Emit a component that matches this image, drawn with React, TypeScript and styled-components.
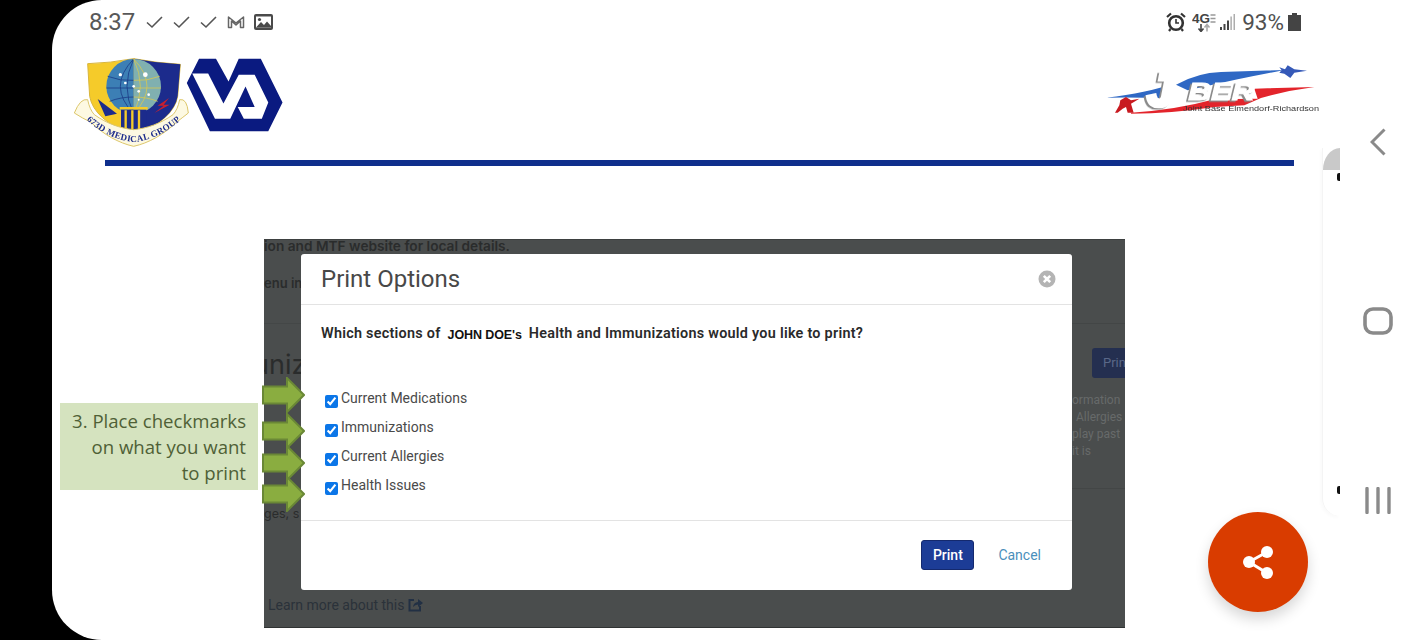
import React from "react";
import styled, { createGlobalStyle } from "styled-components";

const Global = createGlobalStyle`
  html, body { margin: 0; padding: 0; background: #000; }
  body { font-family: Roboto, "Liberation Sans", sans-serif; }
`;

const Page = styled.div`
  width: 1422px; height: 640px; background: #000; padding-left: 52px;
  box-sizing: border-box; display: flex; overflow: hidden;
`;
const Screen = styled.div`
  flex: 1; background: #fff; border-radius: 50px 0 0 50px; display: flex; position: relative; overflow: hidden;
`;
const Main = styled.main`
  width: 1270px; flex: none; display: flex; flex-direction: column;
`;
const StatusBar = styled.div`
  height: 44px; flex: none; padding: 0 21px 0 37px; display: flex; align-items: center; justify-content: space-between; color: #555;
`;
const StatusGroup = styled.div`
  display: flex; align-items: center;
`;
const Clock = styled.span`
  font-size: 24px; color: #585858; margin-right: 11px; width: 46px;
`;
const Percent = styled.span`
  font-size: 22.5px; color: #505050; margin: 0 4px 0 7px;
`;
const LogoRow = styled.div`
  height: 110px; flex: none; padding: 14px 0 0 21px; display: flex; align-items: flex-start; box-sizing: border-box;
`;
const Logo = styled.svg<{ $ml?: number; $mt?: number }>`
  flex: none; filter: blur(0.5px); margin-left: ${(p) => p.$ml ?? 0}px; margin-top: ${(p) => p.$mt ?? 0}px;
`;
const Rule = styled.div`
  width: 1189px; height: 6px; background: #0f2f8c; margin: 6px 0 0 53px; flex: none;
`;
const Stage = styled.div`
  display: flex; align-items: flex-start; margin-top: 73px; padding-left: 8px;
`;
const Callout = styled.div`
  width: 198px; height: 87px; margin: 164px 6px 0 0; flex: none; background: #d5e3bf; box-sizing: border-box;
  padding: 5px 12px 0 0; text-align: right; font-family: "Open Sans", sans-serif; font-size: 18.6px; line-height: 26px; color: #4f6036;
`;
const Shot = styled.div`
  width: 861px; height: 389px; flex: none; position: relative; background: #4a4d4d; color: #2c2f2f;
  display: grid; grid-template-columns: 37px 771px 53px; grid-template-rows: 15px 336px 38px;
  font-family: Inter, Roboto, sans-serif; overflow: visible;
`;
const ShotTop = styled.div`
  grid-column: 1 / 4; font-size: 13.7px; font-weight: 600; line-height: 13px; white-space: nowrap; overflow: hidden; border-top: 1px solid #3d4040; box-sizing: border-box; color: #2a2c2c;
`;
const Gutter = styled.div`
  overflow: hidden; white-space: nowrap; display: flex; flex-direction: column;
`;
const GutterBold = styled.div`
  font-size: 13px; font-weight: 600; line-height: 16px; margin-top: 21px; color: #2a2c2c;
`;
const GutterLine = styled.div`
  height: 1px; background: #444747; margin-top: 32px;
`;
const GutterBig = styled.div`
  font-size: 27px; line-height: 36px; margin: 23px 0 0 -11px; color: #2a2c2c;
`;
const GutterSmall = styled.div`
  font-size: 12.5px; line-height: 16px; margin-top: 123px; color: #2a2c2c;
`;
const RightLine = styled.div<{ $mt: number }>`
  height: 1px; flex: none; background: #434646; margin-top: ${(p) => p.$mt}px;
`;
const GhostButton = styled.div`
  width: 53px; height: 30px; flex: none; background: #242f50; color: #5a6888; font-size: 13px; font-weight: 400; line-height: 30px;
  border-radius: 3px 0 0 3px; margin: 24px 0 0 20px; padding-left: 11px; box-sizing: border-box; font-family: Roboto, sans-serif;
`;
const RightText = styled.div<{ $ml: number; $mt?: number }>`
  font-family: Roboto, sans-serif; font-size: 12px; line-height: 17px; color: #676a6a; margin-left: ${(p) => p.$ml}px; margin-top: ${(p) => p.$mt ?? 0}px;
`;
const ShotBottom = styled.div`
  grid-column: 1 / 4; display: flex; align-items: flex-start; gap: 4px; padding: 7px 0 0 4px; box-sizing: border-box;
  font-family: Roboto, sans-serif; font-size: 14px; line-height: 17px; color: #2b323a; border-bottom: 1px solid #303333;
`;
const Modal = styled.div`
  background: #fff; border-radius: 3px; display: flex; flex-direction: column; font-family: Roboto, sans-serif; color: #444;
`;
const ModalHeader = styled.div`
  height: 51px; flex: none; box-sizing: border-box; border-bottom: 1px solid #e3e3e3; padding: 0 16px 0 20px;
  display: flex; align-items: center; justify-content: space-between;
`;
const ModalTitle = styled.h2`
  margin: 0; font-size: 24px; font-weight: 400; color: #484848;
`;
const ModalBody = styled.div`
  height: 216px; flex: none; box-sizing: border-box; border-bottom: 1px solid #e3e3e3; padding: 19px 0 0 20px;
`;
const Question = styled.div`
  display: flex; align-items: center; gap: 7px; font-size: 14.4px; font-weight: 600; line-height: 18px; color: #2a2a2a; letter-spacing: 0.26px; margin-bottom: 46px;
`;
const PatientName = styled.span`
  font-family: "Liberation Sans", sans-serif; font-size: 12.5px; font-weight: 700; color: #111; letter-spacing: -0.1px; padding-top: 2px;
`;
const CheckRows = styled.div`
  display: flex; flex-direction: column; gap: 11px;
`;
const CheckRow = styled.label`
  height: 18px; display: flex; align-items: flex-start; font-size: 14px; line-height: 16px; color: #4a4a4a;
`;
const Box = styled.input`
  width: 13px; height: 13px; margin: 5px 3px 0 4px; accent-color: #0b76e8;
`;
const ModalFooter = styled.div`
  flex: 1; display: flex; align-items: flex-start; justify-content: flex-end; gap: 24px; padding: 19px 31px 0 0;
`;
const PrintButton = styled.button`
  width: 53px; height: 30px; padding: 0; background: #1c3c96; border: 1px solid #14296e; border-radius: 3px; color: #fff;
  font-family: Roboto, sans-serif; font-size: 14px; font-weight: 500;
`;
const CancelLink = styled.a`
  font-size: 14px; line-height: 30px; color: #4a8fbb;
`;
const Arrow = styled.svg<{ $top: number }>`
  position: absolute; left: -2px; top: ${(p) => p.$top}px; z-index: 2;
`;
const Handle = styled.div`
  width: 18px; flex: none; height: 368px; margin-top: 148px; box-sizing: border-box; border-left: 1px solid #f4f4f4;
  border-bottom-left-radius: 20px; box-shadow: -2px 2px 3px rgba(0,0,0,.02); display: flex; flex-direction: column; align-items: flex-end;
`;
const HandleCap = styled.div`
  width: 100%; height: 22px; background: #c9c9c9; border-top-left-radius: 100%;
`;
const HandleDot = styled.div<{ $m: string }>`
  width: 3px; height: 8px; background: #111; border-radius: 2px 0 0 2px; margin: ${(p) => p.$m};
`;
const Nav = styled.nav`
  flex: 1; display: flex; flex-direction: column; align-items: center; padding-top: 128px; box-sizing: border-box;
`;
const NavIcon = styled.svg<{ $mt?: number }>`
  margin-top: ${(p) => p.$mt ?? 0}px; flex: none; margin-left: -6px;
`;
const Fab = styled.button`
  position: absolute; left: 1156px; top: 512px; width: 100px; height: 100px; border-radius: 50%; border: 0; padding: 0;
  background: #d93c00; box-shadow: 0 7px 14px rgba(0,0,0,.16); display: flex; align-items: center; justify-content: center;
`;

const Check = ({ ml }: { ml: number }) => (
  <svg width="17" height="14" viewBox="0 0 17 14" style={{ marginLeft: ml }}>
    <path d="M1 7.5 L6 12 L16 2" fill="none" stroke="#555" strokeWidth="1.6" />
  </svg>
);

const Shield = () => (
  <Logo width="116" height="89" viewBox="8 25 348 267">
    <path d="M52 42 Q120 40 190 27 Q260 40 330 44 L322 140 Q310 210 190 258 Q70 210 58 140 Z" fill="#f5cb2a" stroke="#d8b53c" strokeWidth="3" />
    <path d="M190 27 Q260 40 330 44 L322 140 Q310 210 190 258 Z" fill="#1c2b8c" />
    <path d="M190 28 A82 82 0 0 0 190 192 Z" fill="#3c7fb5" />
    <path d="M190 28 A82 82 0 0 1 190 192 Z" fill="#80b0b0" />
    <g fill="none" strokeWidth="2.4">
      <g stroke="#1b3a85">
        <path d="M190 28 Q110 110 190 192 M190 28 Q150 110 190 192 M112 80 Q150 95 190 92 M108 115 H190 M118 155 Q150 142 190 142" />
      </g>
      <g stroke="#d8c850">
        <path d="M190 28 Q270 110 190 192 M190 28 Q230 110 190 192 M268 80 Q230 95 190 92 M272 115 H190 M262 155 Q230 142 190 142" />
      </g>
    </g>
    <g fill="#fff">
      <circle cx="150" cy="75" r="5" /><circle cx="165" cy="100" r="4" /><circle cx="190" cy="110" r="4" />
      <circle cx="225" cy="75" r="7" /><circle cx="205" cy="125" r="4" /><circle cx="235" cy="135" r="4" /><circle cx="205" cy="150" r="3" />
    </g>
    <path d="M82 148 L140 192 L105 200 Z" fill="#1c2b8c" />
    <path d="M148 172 H232 V180 H148 Z" fill="#f5cb2a" />
    <path d="M152 180 H228 V232 L190 252 L152 232 Z" fill="#1c2b8c" />
    <path d="M166 182 V240 M186 182 V248 M206 182 V240" stroke="#f5cb2a" strokeWidth="7" />
    <path d="M296 145 L262 168 L280 168 L252 190 L298 165 L280 165 Z" fill="#c8202e" />
    <path d="M12 190 Q30 145 52 150 Q58 180 72 195 C110 222 150 236 190 240 C230 236 270 222 308 195 Q322 180 328 150 Q350 145 354 190 Q335 205 318 218 C280 255 235 280 190 290 C145 280 100 255 62 218 Q35 205 12 190 Z" fill="#fdf9e2" stroke="#dcc66a" strokeWidth="3" />
    <path id="ribbonText" d="M42 205 C90 250 140 272 190 277 C240 272 290 250 338 205" fill="none" />
    <text fontFamily="'Liberation Serif', serif" fontWeight="700" fontSize="27" letterSpacing="1" fill="#1c2b8c">
      <textPath href="#ribbonText" startOffset="50%" textAnchor="middle">673D MEDICAL GROUP</textPath>
    </text>
  </Logo>
);

const VA = () => (
  <Logo width="98" height="74" viewBox="20 26 288 218" $ml={-3}>
    <path d="M58 28 H108 L145 95 L175 28 H240 L304 157 L262 242 H90 L22 100 Z" fill="#0a1a80" />
    <path d="M38 72 H85 L130 160 L175 75 H222 L262 157 L243 205 H190 L172 170 H222 L195 110 L150 205 H105 Z" fill="#fff" />
  </Logo>
);

const Jber = () => (
  <Logo width="214" height="54" viewBox="25 20 642 162" $ml={822} $mt={4}>
    <path d="M25 127 Q150 112 225 85 L205 130 Q120 125 25 127 Z" fill="#2f68c4" />
    <path d="M235 88 Q300 52 370 50 L560 44 Q470 62 420 72 L270 105 Z" fill="#2f68c4" />
    <path d="M570 30 L590 42 L628 46 L590 52 L578 68 L560 55 L545 52 L552 45 L545 36 L562 42 Z" fill="#3559b8" />
    <path d="M100 172 Q230 165 350 132 L480 130 L470 100 L650 95 Q570 105 490 128 L440 150 L350 155 Q220 175 100 175 Z" fill="#e3242b" />
    <path d="M60 172 L52 172 L65 150 L68 135 L85 125 L100 135 L125 130 L100 145 L108 172 L90 172 L85 155 L75 160 Z" fill="#c81a20" />
    <g fontFamily="'Liberation Sans', sans-serif" fontWeight="700" fontStyle="italic" fill="#fff" stroke="#fff" style={{ filter: "drop-shadow(-6px 4px 0 #8a8a8a)" }}>
      <text x="150" y="152" fontSize="140" strokeWidth="14">J</text>
      <text x="272" y="135" fontSize="70" strokeWidth="3" textLength="198" lengthAdjust="spacingAndGlyphs">BER</text>
    </g>
    <text x="256" y="166" fontFamily="'Liberation Sans', sans-serif" fontSize="20" fill="#333" textLength="408" lengthAdjust="spacingAndGlyphs">Joint Base Elmendorf-Richardson</text>
  </Logo>
);

const rows = ["Current Medications", "Immunizations", "Current Allergies", "Health Issues"];
const arrowTops = [138, 174, 206, 237];

export default function App() {
  return (
    <>
      <Global />
      <Page>
        <Screen>
          <Main>
            <StatusBar>
              <StatusGroup>
                <Clock>8:37</Clock>
                <Check ml={0} />
                <Check ml={10} />
                <Check ml={10} />
                <svg width="18" height="14" viewBox="0 0 18 14" style={{ marginLeft: 10 }}>
                  <path d="M1.5 12.5 V2 L9 8 L16.5 2 V12.5 H13.5 V6 L9 10 L4.5 6 V12.5 Z" fill="none" stroke="#666" strokeWidth="1.5" strokeLinejoin="round" />
                </svg>
                <svg width="19" height="16" viewBox="0 0 19 16" style={{ marginLeft: 9 }}>
                  <rect x="0" y="0" width="19" height="16" rx="2" fill="#4a4a4a" />
                  <rect x="2" y="2.5" width="15" height="11" fill="#fff" />
                  <circle cx="5.5" cy="5.5" r="1.6" fill="#4a4a4a" />
                  <path d="M2 13.5 L7 8 L10 11 L13 7.5 L17 12 V13.5 Z" fill="#4a4a4a" />
                </svg>
              </StatusGroup>
              <StatusGroup>
                <svg width="20" height="20" viewBox="0 0 20 20">
                  <circle cx="10" cy="11" r="6.8" fill="#fff" stroke="#333" strokeWidth="2.6" />
                  <path d="M10 7 V11 H13" fill="none" stroke="#333" strokeWidth="1.6" />
                  <path d="M1 5 L5 1.5 M19 5 L15 1.5 M4.5 17 L3 19 M15.5 17 L17 19" stroke="#333" strokeWidth="2.2" />
                </svg>
                <svg width="24" height="20" viewBox="0 0 24 20" style={{ marginLeft: 6 }}>
                  <text x="0" y="11" fontFamily="'Liberation Sans', sans-serif" fontWeight="700" fontSize="13" fill="#444" textLength="18" lengthAdjust="spacingAndGlyphs">4G</text>
                  <path d="M18.5 3 H23.5 M18.5 6.5 H23.5 M18.5 10 H23.5" stroke="#999" strokeWidth="1.4" />
                  <path d="M9 12 V19 M6.5 16.5 L9 19.5 L11.5 16.5" fill="none" stroke="#444" strokeWidth="1.6" />
                  <path d="M15 19.5 V13 M12.5 15.5 L15 12.5 L17.5 15.5" fill="none" stroke="#aaa" strokeWidth="1.6" />
                </svg>
                <svg width="16" height="18" viewBox="0 0 16 18" style={{ marginLeft: 3 }}>
                  <path d="M1 14 H3 V17 H1 Z M4.5 11 H6.5 V17 H4.5 Z M8 7.5 H10 V17 H8 Z" fill="#444" />
                  <path d="M11.5 3.5 H12.7 V17 H11.5 Z M14.6 1 H15.8 V17 H14.6 Z" fill="#999" />
                </svg>
                <Percent>93%</Percent>
                <svg width="13" height="18" viewBox="0 0 13 18">
                  <path d="M4 0 H9 V2 H13 V18 H0 V2 H4 Z" fill="#444" />
                </svg>
              </StatusGroup>
            </StatusBar>
            <LogoRow>
              <Shield />
              <VA />
              <Jber />
            </LogoRow>
            <Rule />
            <Stage>
              <Callout>
                3. Place checkmarks
                <br />
                on what you want
                <br />
                to print
              </Callout>
              <Shot>
                <ShotTop>ion and MTF website for local details.</ShotTop>
                <Gutter>
                  <GutterBold>enu in</GutterBold>
                  <GutterLine />
                  <GutterBig>uniz</GutterBig>
                  <GutterSmall>ges, s</GutterSmall>
                </Gutter>
                <Modal>
                  <ModalHeader>
                    <ModalTitle>Print Options</ModalTitle>
                    <svg width="18" height="18" viewBox="0 0 18 18">
                      <circle cx="9" cy="9" r="8.5" fill="#b4b4b4" />
                      <path d="M5.8 5.8 L12.2 12.2 M12.2 5.8 L5.8 12.2" stroke="#fff" strokeWidth="2.6" />
                    </svg>
                  </ModalHeader>
                  <ModalBody>
                    <Question>
                      <span>Which sections of</span>
                      <PatientName>JOHN DOE's</PatientName>
                      <span>Health and Immunizations would you like to print?</span>
                    </Question>
                    <CheckRows>
                      {rows.map((r) => (
                        <CheckRow key={r}>
                          <Box type="checkbox" checked readOnly />
                          {r}
                        </CheckRow>
                      ))}
                    </CheckRows>
                  </ModalBody>
                  <ModalFooter>
                    <PrintButton>Print</PrintButton>
                    <CancelLink>Cancel</CancelLink>
                  </ModalFooter>
                </Modal>
                <Gutter>
                  <RightLine $mt={69} />
                  <GhostButton>Prin</GhostButton>
                  <RightText $ml={0} $mt={14}>ormation</RightText>
                  <RightText $ml={4}>Allergies</RightText>
                  <RightText $ml={0}>play past</RightText>
                  <RightText $ml={0}>it is</RightText>
                  <RightLine $mt={28} />
                </Gutter>
                <ShotBottom>
                  Learn more about this
                  <svg width="15" height="15" viewBox="0 0 15 15">
                    <path d="M6 3 H1.5 V13.5 H12 V9" fill="none" stroke="#223044" strokeWidth="2" />
                    <path d="M5 10 Q5.5 5.5 10 5 V2 L15 6 L10 10 V7.5 Q7 7.5 5 10 Z" fill="#223044" />
                  </svg>
                </ShotBottom>
                {arrowTops.map((t) => (
                  <Arrow key={t} $top={t} width="43" height="36" viewBox="0 0 43 36">
                    <path d="M1 9.5 H25 V1 L42 18 L25 35 V26.5 H1 Z" fill="#8aad40" stroke="#6a8836" strokeWidth="2" />
                  </Arrow>
                ))}
              </Shot>
            </Stage>
          </Main>
          <Handle>
            <HandleCap />
            <HandleDot $m="3px 0 0 0" />
            <HandleDot $m="auto 0 22px 0" />
          </Handle>
          <Nav>
            <NavIcon width="16" height="28" viewBox="0 0 16 28">
              <path d="M14.5 1.5 L2 14 L14.5 26.5" fill="none" stroke="#8a8a8a" strokeWidth="3" />
            </NavIcon>
            <NavIcon $mt={151} width="30" height="28" viewBox="0 0 30 28">
              <rect x="2" y="2" width="26" height="24" rx="8" fill="none" stroke="#8a8a8a" strokeWidth="3.6" />
            </NavIcon>
            <NavIcon $mt={152} width="28" height="27" viewBox="0 0 28 27">
              <path d="M3 1.5 V25.5 M14 1.5 V25.5 M25 1.5 V25.5" fill="none" stroke="#8a8a8a" strokeWidth="3.4" strokeLinecap="round" />
            </NavIcon>
          </Nav>
          <Fab aria-label="Share">
            <svg width="36" height="36" viewBox="0 0 36 36">
              <path d="M27 8 L9 18 L27 29" fill="none" stroke="#fff" strokeWidth="3" />
              <circle cx="27" cy="8" r="6" fill="#fff" />
              <circle cx="9" cy="18" r="6" fill="#fff" />
              <circle cx="27" cy="29" r="6" fill="#fff" />
            </svg>
          </Fab>
        </Screen>
      </Page>
    </>
  );
}
